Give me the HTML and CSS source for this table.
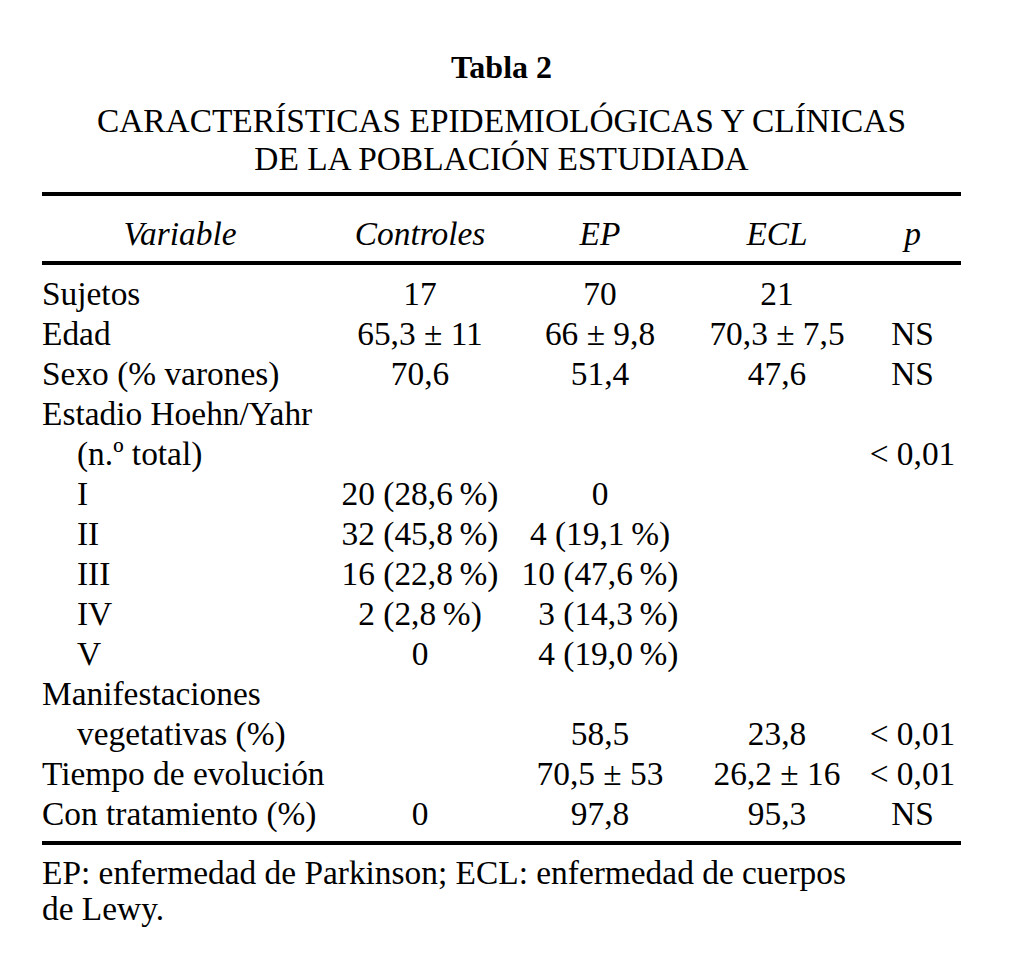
FILE: index.html
```html
<!DOCTYPE html>
<html lang="es">
<head>
<meta charset="utf-8">
<title>Tabla 2</title>
<link rel="stylesheet" href="styles.css">
</head>
<body>
<main class="page">
  <h1 class="caption">Tabla 2</h1>
  <h2 class="title">CARACTERÍSTICAS EPIDEMIOLÓGICAS Y CLÍNICAS<br>DE LA POBLACIÓN ESTUDIADA</h2>
  <div class="table">
    <div class="row head">
      <div class="cell label">Variable</div>
      <div class="cell">Controles</div>
      <div class="cell">EP</div>
      <div class="cell">ECL</div>
      <div class="cell">p</div>
    </div>
    <div class="body">
      <div class="row">
        <div class="cell label">Sujetos</div>
        <div class="cell">17</div>
        <div class="cell">70</div>
        <div class="cell">21</div>
        <div class="cell"></div>
      </div>
      <div class="row">
        <div class="cell label">Edad</div>
        <div class="cell">65,3 ± 11</div>
        <div class="cell">66 ± 9,8</div>
        <div class="cell">70,3 ± 7,5</div>
        <div class="cell">NS</div>
      </div>
      <div class="row">
        <div class="cell label">Sexo (% varones)</div>
        <div class="cell">70,6</div>
        <div class="cell">51,4</div>
        <div class="cell">47,6</div>
        <div class="cell">NS</div>
      </div>
      <div class="row">
        <div class="cell label">Estadio Hoehn/Yahr</div>
        <div class="cell"></div>
        <div class="cell"></div>
        <div class="cell"></div>
        <div class="cell"></div>
      </div>
      <div class="row">
        <div class="cell label indent">(n.º total)</div>
        <div class="cell"></div>
        <div class="cell"></div>
        <div class="cell"></div>
        <div class="cell">&lt; 0,01</div>
      </div>
      <div class="row">
        <div class="cell label indent">I</div>
        <div class="cell">20 (28,6&thinsp;%)</div>
        <div class="cell">0</div>
        <div class="cell"></div>
        <div class="cell"></div>
      </div>
      <div class="row">
        <div class="cell label indent">II</div>
        <div class="cell">32 (45,8&thinsp;%)</div>
        <div class="cell">4 (19,1&thinsp;%)</div>
        <div class="cell"></div>
        <div class="cell"></div>
      </div>
      <div class="row">
        <div class="cell label indent">III</div>
        <div class="cell">16 (22,8&thinsp;%)</div>
        <div class="cell">10 (47,6&thinsp;%)</div>
        <div class="cell"></div>
        <div class="cell"></div>
      </div>
      <div class="row">
        <div class="cell label indent">IV</div>
        <div class="cell">2 (2,8&thinsp;%)</div>
        <div class="cell">&#8199;3 (14,3&thinsp;%)</div>
        <div class="cell"></div>
        <div class="cell"></div>
      </div>
      <div class="row">
        <div class="cell label indent">V</div>
        <div class="cell">0</div>
        <div class="cell">&#8199;4 (19,0&thinsp;%)</div>
        <div class="cell"></div>
        <div class="cell"></div>
      </div>
      <div class="row">
        <div class="cell label">Manifestaciones</div>
        <div class="cell"></div>
        <div class="cell"></div>
        <div class="cell"></div>
        <div class="cell"></div>
      </div>
      <div class="row">
        <div class="cell label indent">vegetativas (%)</div>
        <div class="cell"></div>
        <div class="cell">58,5</div>
        <div class="cell">23,8</div>
        <div class="cell">&lt; 0,01</div>
      </div>
      <div class="row">
        <div class="cell label">Tiempo de evolución</div>
        <div class="cell"></div>
        <div class="cell">70,5 ± 53</div>
        <div class="cell">26,2 ± 16</div>
        <div class="cell">&lt; 0,01</div>
      </div>
      <div class="row">
        <div class="cell label">Con tratamiento (%)</div>
        <div class="cell">0</div>
        <div class="cell">97,8</div>
        <div class="cell">95,3</div>
        <div class="cell">NS</div>
      </div>
    </div>
  </div>
  <p class="note">EP: enfermedad de Parkinson; ECL: enfermedad de cuerpos de Lewy.</p>
</main>
</body>
</html>
```

FILE: styles.css
```css
html, body {
  margin: 0;
  padding: 0;
  background: #ffffff;
}

.page {
  width: 919px;
  margin-left: 42px;
  padding-top: 47px;
  font-family: "Liberation Serif", "Times New Roman", serif;
  font-size: 33.4px;
  color: #000000;
}

.caption {
  margin: 0;
  font-size: 32px;
  font-weight: bold;
  line-height: 40px;
  text-align: center;
}

.title {
  margin: 15px 0 0;
  font-size: 33.4px;
  font-weight: normal;
  line-height: 38px;
  text-align: center;
}

.table {
  margin-top: 14px;
  border-top: 4px solid #000000;
  border-bottom: 4px solid #000000;
}

.row {
  display: grid;
  grid-template-columns: 288px 180px 180px 174px 97px;
  line-height: 40px;
}

.head {
  padding: 18px 0 7px;
  border-bottom: 4px solid #000000;
  font-style: italic;
}

.body {
  padding: 9px 0 7px;
}

.cell {
  text-align: center;
  white-space: nowrap;
}

.label {
  text-align: left;
}

.head .label {
  text-align: center;
  padding-right: 12px;
}

.indent {
  padding-left: 35px;
}

.note {
  margin: 10px 0 0;
  max-width: 825px;
  line-height: 36px;
}
```
